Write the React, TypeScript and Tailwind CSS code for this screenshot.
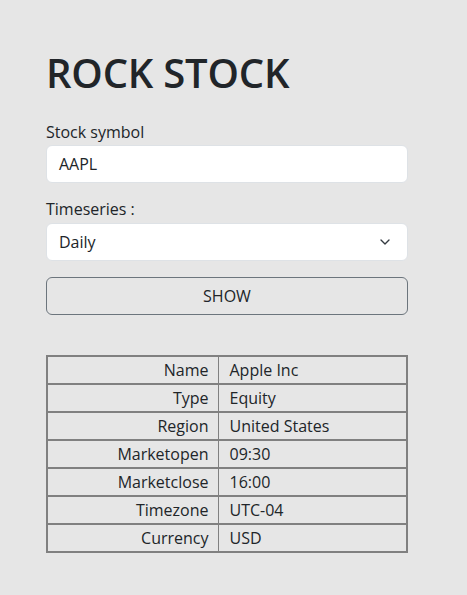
import { ChevronDown } from "lucide-react";

const rows: [string, string][] = [
  ["Name", "Apple Inc"],
  ["Type", "Equity"],
  ["Region", "United States"],
  ["Marketopen", "09:30"],
  ["Marketclose", "16:00"],
  ["Timezone", "UTC-04"],
  ["Currency", "USD"],
];

export default function App() {
  return (
    <div className="min-h-screen bg-[#e6e6e6] text-[#212529] font-['Open_Sans',sans-serif]">
      <div className="mx-[46px] w-[362px] pt-[49px]">
        <h1 className="text-[40px] font-semibold leading-[48px] tracking-[-0.2px]">ROCK STOCK</h1>

        <label className="mt-[23px] block text-[16px] leading-[24px]">Stock symbol</label>
        <div className="mt-[1px] flex h-[38px] items-center rounded-[6px] border border-[#dee2e6] bg-white px-[12px] text-[16px]">
          AAPL
        </div>

        <label className="mt-[14px] block text-[16px] leading-[24px]">Timeseries :</label>
        <div className="mt-[2px] flex h-[38px] items-center justify-between rounded-[6px] border border-[#dee2e6] bg-white pl-[12px] pr-[14px] text-[16px]">
          <span>Daily</span>
          <ChevronDown size={16} strokeWidth={2} className="text-[#343a40]" />
        </div>

        <button className="mt-[16px] flex h-[38px] w-full items-center justify-center rounded-[6px] border border-[#6c757d] text-[16px]">
          SHOW
        </button>

        <table className="mt-[40px] w-full border-collapse border-2 border-[#808080] text-[16px]">
          <tbody>
            {rows.map(([k, v]) => (
              <tr key={k} className="h-[28px]">
                <td className="w-[171px] border-2 border-r border-[#808080] pr-[9px] text-right leading-[24px]">{k}</td>
                <td className="border-2 border-l border-[#808080] pl-[11px] leading-[24px]">{v}</td>
              </tr>
            ))}
          </tbody>
        </table>
      </div>
    </div>
  );
}
